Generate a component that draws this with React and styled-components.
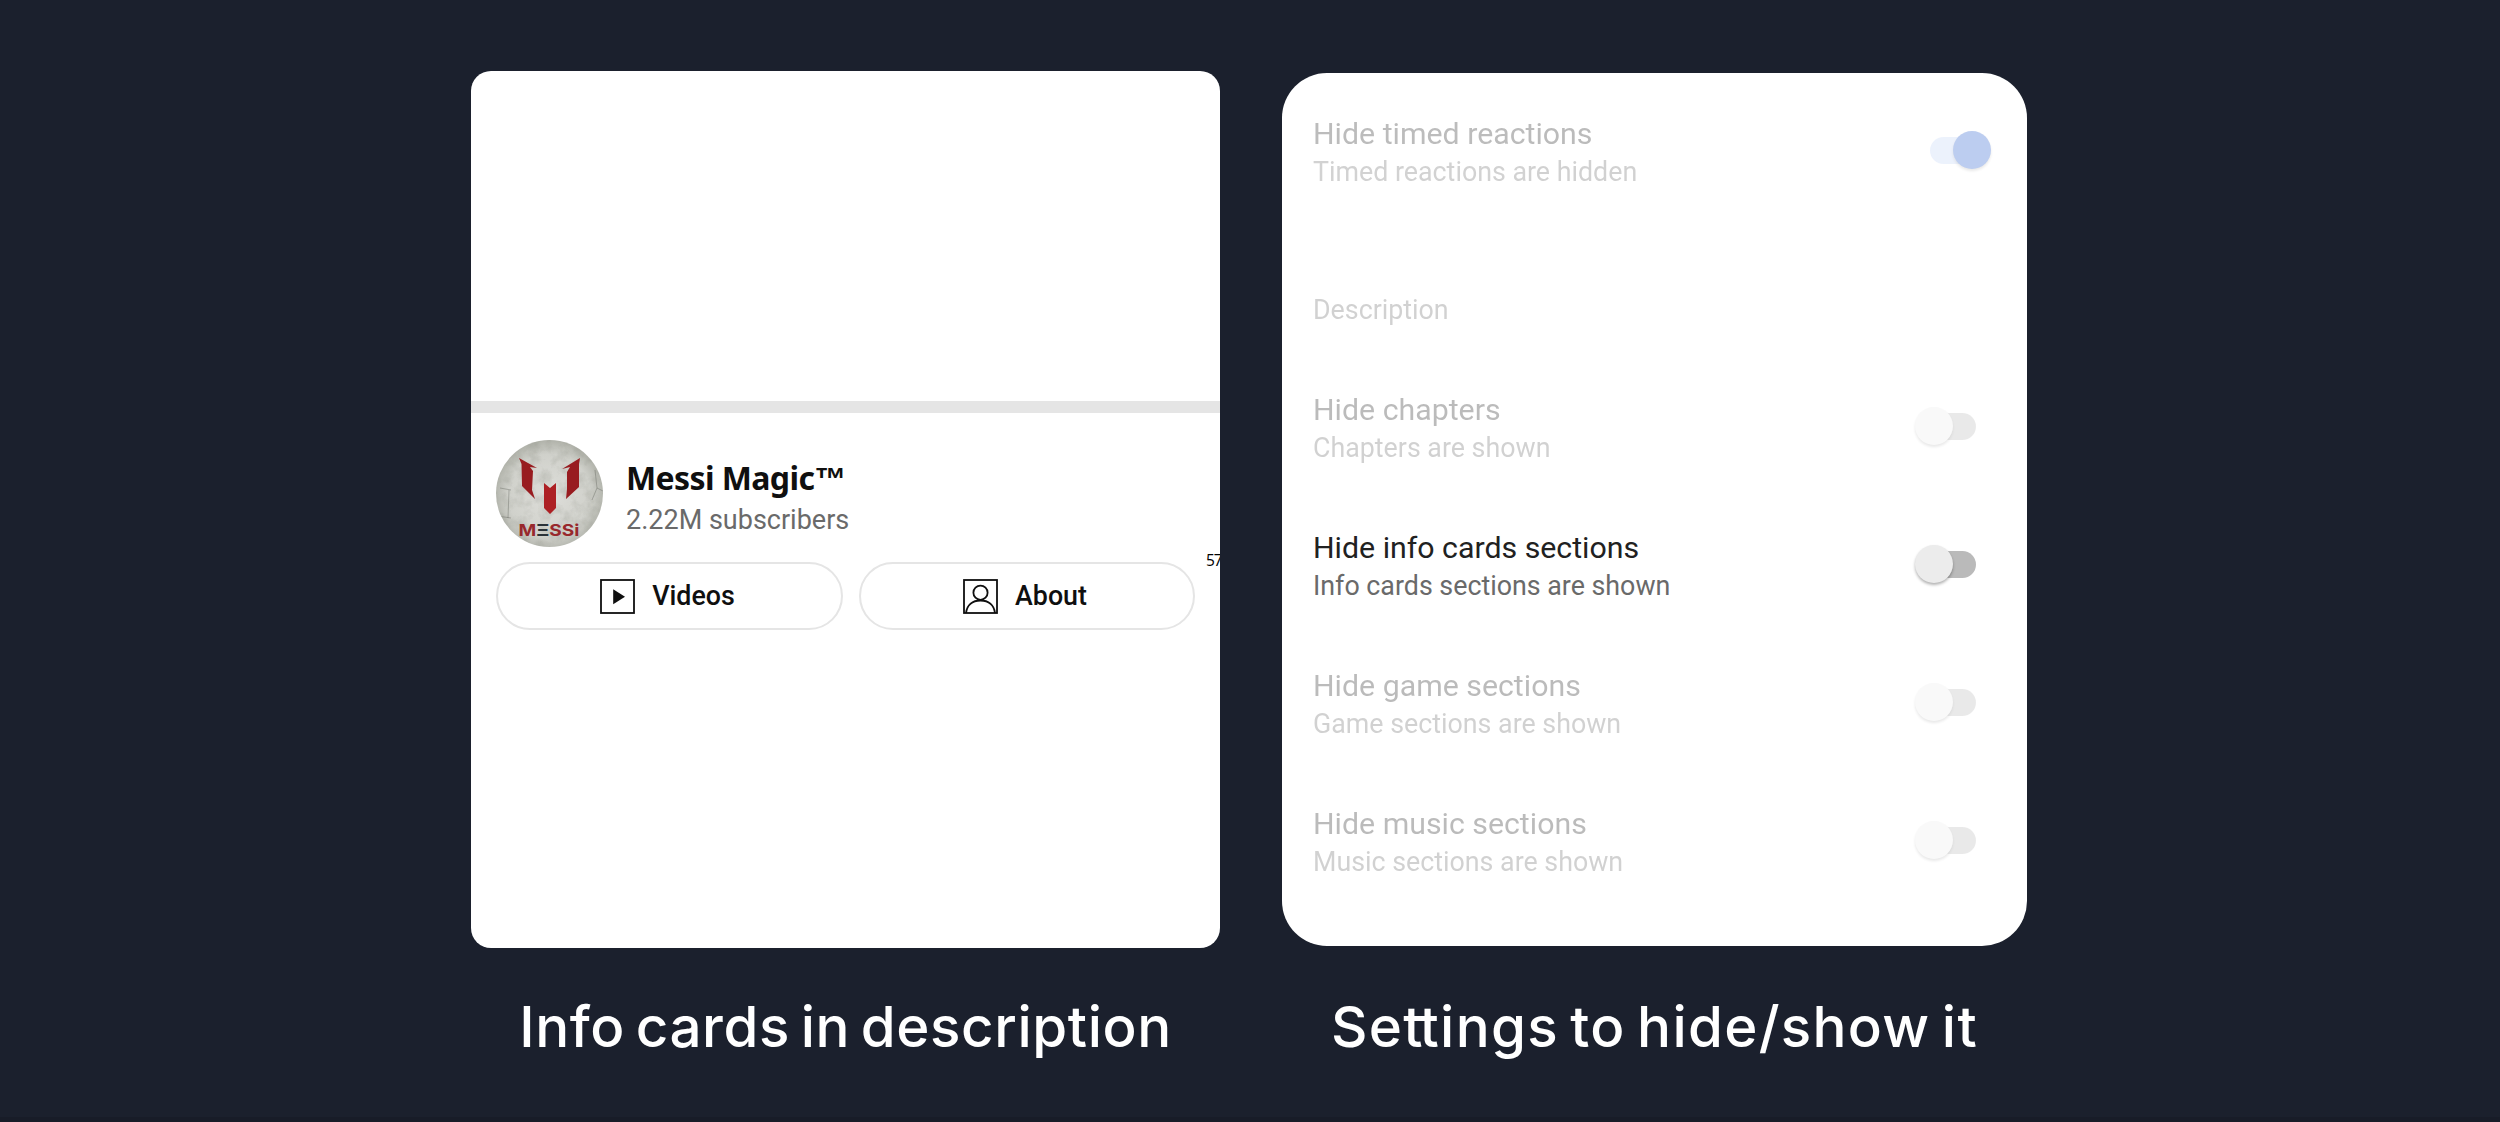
import React from "react";
import styled, { createGlobalStyle } from "styled-components";

const GlobalStyle = createGlobalStyle`
  *, *::before, *::after { box-sizing: border-box; }
  body { margin: 0; background: #1b202d; }
`;

const Page = styled.main`
  width: 2500px;
  height: 1122px;
  background: #1b202d;
  border-bottom: 5px solid #181c28;
  display: flex;
  align-items: flex-start;
  gap: 62px;
  padding: 71px 0 0 471px;
  overflow: hidden;
`;

const Column = styled.figure`
  margin: ${(p) => p.$top || 0}px 0 0;
  width: ${(p) => p.$width}px;
  display: flex;
  flex-direction: column;
  align-items: center;
`;

const Card = styled.section`
  position: relative;
  width: 100%;
  height: ${(p) => p.$height}px;
  border-radius: ${(p) => p.$radius}px;
  background: #fff;
  overflow: hidden;
  font-family: Roboto, "Liberation Sans", sans-serif;
`;

const Caption = styled.figcaption`
  margin-top: ${(p) => p.$top}px;
  font: 500 56.5px/70px Inter, "Liberation Sans", sans-serif;
  letter-spacing: ${(p) => p.$spacing}px;
  word-spacing: -5px;
  color: #fff;
  white-space: nowrap;
`;

const TightPair = styled.span`
  letter-spacing: -3px;
`;

const Divider = styled.div`
  margin-top: 330px;
  height: 12px;
  background: #e5e5e5;
`;

const Channel = styled.div`
  display: flex;
  align-items: center;
  padding: 27px 25px 0;
`;

const Avatar = styled.svg`
  width: 107px;
  height: 107px;
  flex: none;
`;

const ChannelText = styled.div`
  margin-left: 23px;
  padding-top: 10px;
`;

const ChannelName = styled.h2`
  margin: 0;
  font: 700 32px/42px "Noto Sans", "Open Sans", sans-serif;
  letter-spacing: -0.6px;
  color: #0f0f0f;
  white-space: nowrap;
`;

const TradeMark = styled.span`
  font: 700 32px/20px "Liberation Sans", sans-serif;
  vertical-align: 0;
`;

const Subscribers = styled.p`
  margin: 0;
  font-size: 27px;
  line-height: 42px;
  color: #6a6a6a;
  white-space: nowrap;
`;

const Actions = styled.div`
  display: flex;
  gap: 16px;
  padding: 15px 25px 0;
`;

const PillButton = styled.button`
  width: ${(p) => p.$width}px;
  height: 68px;
  padding: 0 4px 0 0;
  border: 2px solid #e5e5e5;
  border-radius: 34px;
  background: #fff;
  display: flex;
  align-items: center;
  justify-content: center;
  gap: 17px;
  font: 500 26.8px/32px Roboto, "Liberation Sans", sans-serif;
  color: #0f0f0f;
`;

const PillIcon = styled.svg`
  width: 35px;
  height: 35px;
  flex: none;
`;

const EdgeCount = styled.span`
  position: absolute;
  left: 735px;
  top: 479px;
  font: 400 15.5px/20px "Open Sans", "Noto Sans", sans-serif;
  letter-spacing: -1.2px;
  color: #000;
`;

const SettingsList = styled.div`
  padding: 40px 36px 0 31px;
`;

const SettingRow = styled.div`
  height: 138px;
  display: flex;
  justify-content: space-between;
  opacity: ${(p) => (p.$dim ? 0.3 : 1)};
`;

const SettingTitle = styled.div`
  font-size: 30.3px;
  line-height: 41px;
  color: #212121;
  white-space: nowrap;
`;

const SettingNote = styled.div`
  font-size: 26.8px;
  line-height: 37px;
  color: #6a6a6a;
  white-space: nowrap;
`;

const SectionLabel = styled.div`
  height: 138px;
  padding-top: 41px;
  font-size: 26.8px;
  line-height: 37px;
  color: #6a6a6a;
  opacity: 0.3;
`;

const Switch = styled.div`
  width: 61px;
  height: 27px;
  margin-top: ${(p) => (p.$on ? 23.5 : 23.5)}px;
  margin-right: ${(p) => (p.$on ? 0 : 15)}px;
  display: flex;
  align-items: center;
  justify-content: ${(p) => (p.$on ? "flex-end" : "flex-start")};
  background: linear-gradient(${(p) => (p.$on ? "#c1d3f6, #c1d3f6" : "#bababa, #bababa")})
    ${(p) => (p.$on ? "left" : "right")} / 42px 27px no-repeat;
  border-radius: ${(p) => (p.$on ? "14px 0 0 14px" : "0 14px 14px 0")};
`;

const Thumb = styled.div`
  width: 38px;
  height: 38px;
  flex: none;
  border-radius: 50%;
  background: ${(p) => (p.$on ? "#2259cc" : "#ececec")};
  box-shadow: 0 2px 3px rgba(0, 0, 0, 0.3);
`;

const settings = [
  { title: "Hide timed reactions", note: "Timed reactions are hidden", on: true, dim: true },
  { section: "Description" },
  { title: "Hide chapters", note: "Chapters are shown", dim: true },
  { title: "Hide info cards sections", note: "Info cards sections are shown" },
  { title: "Hide game sections", note: "Game sections are shown", dim: true },
  { title: "Hide music sections", note: "Music sections are shown", dim: true },
];

function ChannelAvatar() {
  return (
    <Avatar viewBox="0 0 107 107">
      <defs>
        <radialGradient id="wall" cx="50%" cy="52%" r="55%">
          <stop offset="0" stopColor="#dededa" />
          <stop offset="0.7" stopColor="#d0d1cb" />
          <stop offset="1" stopColor="#a9aba2" />
        </radialGradient>
        <filter id="grain" x="0" y="0" width="100%" height="100%">
          <feTurbulence type="fractalNoise" baseFrequency="0.09" numOctaves="4" seed="4" />
          <feColorMatrix values="0 0 0 0 .25  0 0 0 0 .26  0 0 0 0 .22  1.6 0 0 0 -.65" />
        </filter>
        <clipPath id="round"><circle cx="53.5" cy="53.5" r="53.5" /></clipPath>
      </defs>
      <g clipPath="url(#round)">
        <rect width="107" height="107" fill="url(#wall)" />
        <rect width="107" height="107" filter="url(#grain)" opacity="0.35" />
        <path d="M4 48l11 2M13 50l-1 28M1 76l14 2M99 30l2 18 6 3M96 60l5-12" fill="none" stroke="#666860" strokeWidth="0.7" opacity="0.6" />
        <path d="M23 18L41 28L34 27L37 31L36 50L39 59L26 46L25.500 24z" fill="#981c20" />
        <path d="M84 18L66 29L74 27L71 32V49L70 59L83 47V24z" fill="#981c20" />
        <path d="M48 43l6 5 6-5v25l-6 6-6-6z" fill="#ad2024" />
        <text x="22.5" y="96" fontFamily="Inter, sans-serif" fontWeight="700" fontSize="16.5" fill="#98282c" textLength="61" lengthAdjust="spacingAndGlyphs">
          M<tspan fill="#2c3338">Ξ</tspan>SSi
        </text>
      </g>
    </Avatar>
  );
}

function VideosIcon() {
  return (
    <PillIcon viewBox="0 0 35 35">
      <rect x="1" y="1" width="33" height="33" fill="none" stroke="#0f0f0f" strokeWidth="1.8" />
      <path d="M13.2 10.2v15L25 17.7z" fill="#0f0f0f" />
    </PillIcon>
  );
}

function AboutIcon() {
  return (
    <PillIcon viewBox="0 0 35 35" fill="none" stroke="#0f0f0f" strokeWidth="1.8">
      <rect x="1" y="1" width="33" height="33" />
      <circle cx="17.5" cy="13.7" r="7.1" />
      <path d="M3 34c1-8 6.5-12.5 14.5-12.5S31 26 32 34" />
    </PillIcon>
  );
}

export default function App() {
  return (
    <>
      <GlobalStyle />
      <Page>
        <Column $width={749}>
          <Card $height={877} $radius={20}>
            <Divider />
            <Channel>
              <ChannelAvatar />
              <ChannelText>
                <ChannelName>Messi Magic<TradeMark>™</TradeMark></ChannelName>
                <Subscribers>2.22M subscribers</Subscribers>
              </ChannelText>
            </Channel>
            <Actions>
              <PillButton $width={347}><VideosIcon />Videos</PillButton>
              <PillButton $width={336}><AboutIcon />About</PillButton>
            </Actions>
            <EdgeCount>57</EdgeCount>
          </Card>
          <Caption $top={44} $spacing={0.6}>Info cards in description</Caption>
        </Column>
        <Column $width={745} $top={2}>
          <Card $height={873} $radius={45}>
            <SettingsList>
              {settings.map((s) =>
                s.section ? (
                  <SectionLabel key={s.section}>{s.section}</SectionLabel>
                ) : (
                  <SettingRow key={s.title} $dim={s.dim}>
                    <div>
                      <SettingTitle>{s.title}</SettingTitle>
                      <SettingNote>{s.note}</SettingNote>
                    </div>
                    <Switch $on={s.on}><Thumb $on={s.on} /></Switch>
                  </SettingRow>
                )
              )}
            </SettingsList>
          </Card>
          <Caption $top={46} $spacing={1.3}>Se<TightPair>t</TightPair>tings to hide/show it</Caption>
        </Column>
      </Page>
    </>
  );
}
